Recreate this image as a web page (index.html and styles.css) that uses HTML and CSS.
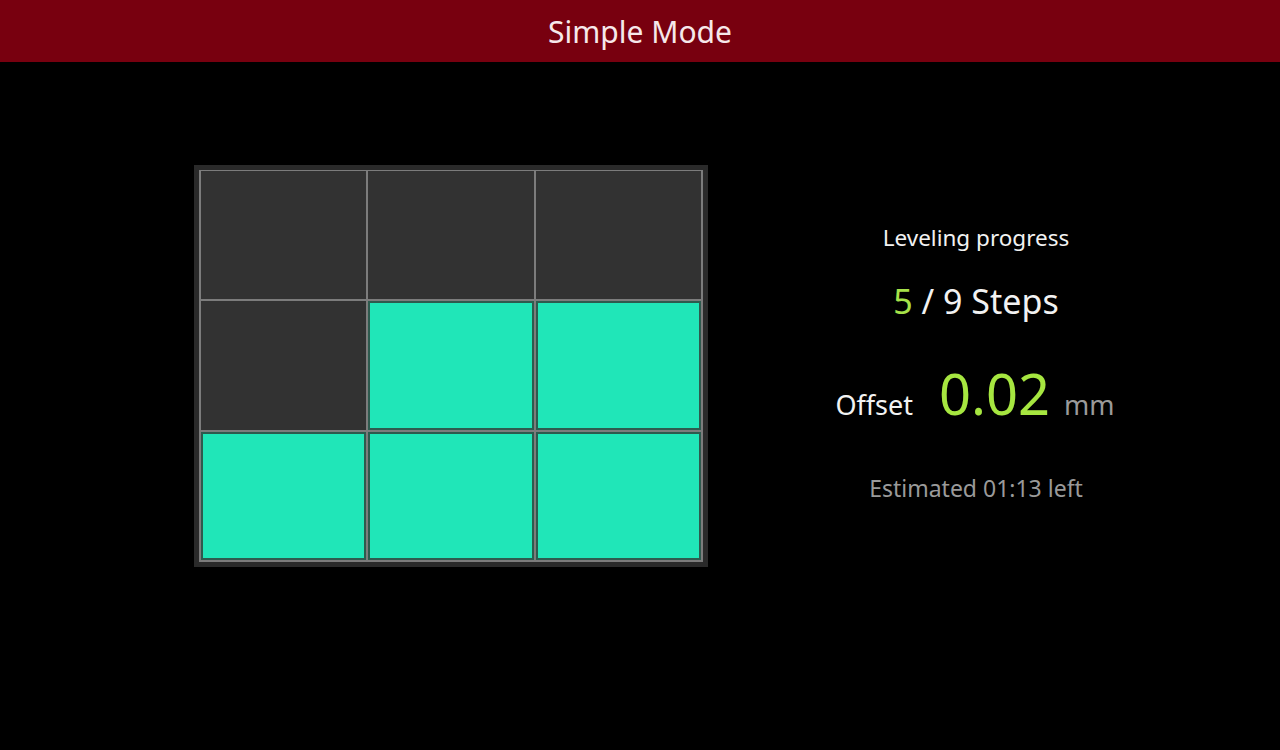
FILE: index.html
```html
<!DOCTYPE html>
<html>
<head>
<meta charset="utf-8">
<link rel="stylesheet" href="styles.css">
</head>
<body>
<header class="topbar">Simple Mode</header>
<main class="content">
  <div class="panel">
    <div class="grid">
      <div class="cell"></div>
      <div class="cell"></div>
      <div class="cell"></div>
      <div class="cell"></div>
      <div class="cell done"></div>
      <div class="cell done"></div>
      <div class="cell done"></div>
      <div class="cell done"></div>
      <div class="cell done"></div>
    </div>
  </div>
  <section class="info">
    <div class="label">Leveling progress</div>
    <div class="steps"><span class="green">5</span> / 9 Steps</div>
    <div class="offset">
      <span class="offset-label">Offset</span>
      <span class="offset-value">0.02</span>
      <span class="offset-unit">mm</span>
    </div>
    <div class="eta">Estimated 01:13 left</div>
  </section>
</main>
</body>
</html>
```
FILE: styles.css
```css
html, body {
  margin: 0;
  padding: 0;
  background: #000;
  font-family: "Noto Sans", "Open Sans", "DejaVu Sans", sans-serif;
  width: 1280px;
  height: 750px;
  overflow: hidden;
}
.topbar {
  height: 62px;
  background: #78000f;
  color: #f6e8ea;
  font-size: 30px;
  line-height: 64px;
  text-align: center;
}
.content {
  display: flex;
  align-items: flex-start;
  padding: 103px 0 0 194px;
}
.panel {
  width: 504px;
  height: 392px;
  padding: 5px;
  background: #2a2a2a;
}
.grid {
  box-sizing: border-box;
  width: 504px;
  height: 392px;
  display: grid;
  grid-template-columns: repeat(3, 1fr);
  grid-template-rows: repeat(3, 1fr);
  gap: 2px;
  padding: 1px 2px 2px 2px;
  background: #7c7c7c;
}
.cell {
  background: #323232;
}
.cell.done {
  background: #20e6b8;
  border: 2px solid #2e5a4e;
}
.info {
  width: 400px;
  margin-left: 68px;
  display: flex;
  flex-direction: column;
  align-items: center;
  color: #f2f2f2;
  padding-top: 58px;
}
.label {
  font-size: 22.5px;
  line-height: 30px;
}
.steps {
  font-size: 34px;
  line-height: 44px;
  margin-top: 26px;
}
.green {
  color: #a6e24a;
}
.offset {
  display: flex;
  align-items: baseline;
  margin-top: 34px;
  height: 72px;
}
.offset-label {
  font-size: 27px;
  margin-left: -2px;
}
.offset-value {
  font-size: 56px;
  line-height: 72px;
  color: #a6e640;
  margin-left: 26px;
}
.offset-unit {
  font-size: 27px;
  color: #9a9a9a;
  margin-left: 14px;
}
.eta {
  font-size: 23px;
  line-height: 30px;
  color: #9a9a9a;
  margin-top: 44px;
}
```
